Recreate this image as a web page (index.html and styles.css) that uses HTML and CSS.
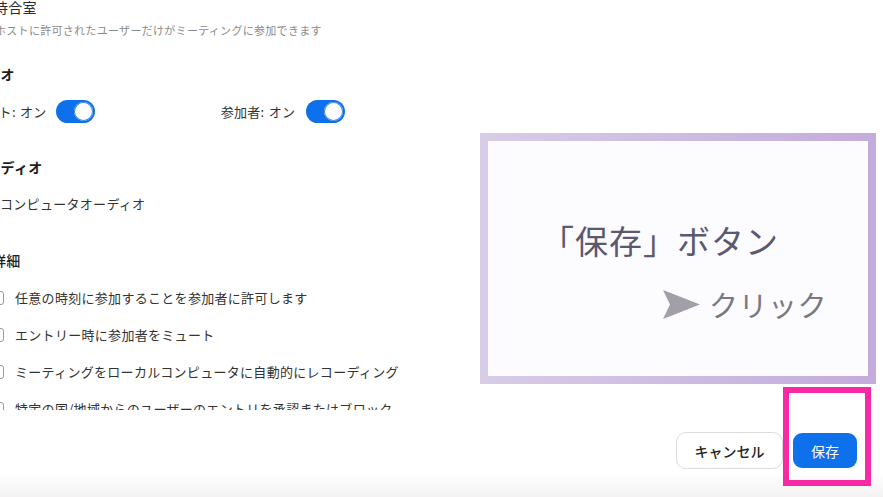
FILE: index.html
```html
<!DOCTYPE html>
<html lang="ja">
<head>
<meta charset="utf-8">
<title>ミーティング設定</title>
<link rel="stylesheet" href="styles.css">
</head>
<body>
<div class="dialog">
  <main class="content">
    <div class="title">待合室</div>
    <p class="desc">ホストに許可されたユーザーだけがミーティングに参加できます</p>
    <h3 class="heading h-video">ビデオ</h3>
    <div class="toggles">
      <div class="tgroup"><span>ホスト: オン</span><span class="switch"><span class="knob"></span></span></div>
      <div class="tgroup second"><span>参加者: オン</span><span class="switch"><span class="knob"></span></span></div>
    </div>
    <h3 class="heading h-audio">オーディオ</h3>
    <div class="option">コンピュータオーディオ</div>
    <h3 class="heading h-detail">詳細</h3>
    <ul class="checks">
      <li><span class="box"></span>任意の時刻に参加することを参加者に許可します</li>
      <li><span class="box"></span>エントリー時に参加者をミュート</li>
      <li><span class="box"></span>ミーティングをローカルコンピュータに自動的にレコーディング</li>
      <li><span class="box"></span>特定の国/地域からのユーザーのエントリを承認またはブロック</li>
    </ul>
  </main>
  <footer class="footer">
    <button class="btn cancel">キャンセル</button>
    <button class="btn save">保存</button>
  </footer>
</div>

<div class="callout">
  <div class="callout-inner">
    <div class="callout-title">「保存」ボタン</div>
    <div class="callout-action">
      <svg class="arrow" width="37" height="29" viewBox="0 0 37 29"><polygon points="0,0 37,14.5 0,29 7,14.5" fill="#a39fa9"/></svg>
      <span>クリック</span>
    </div>
  </div>
</div>
<div class="highlight"></div>
</body>
</html>
```

FILE: styles.css
```css
html, body {
  margin: 0;
  padding: 0;
  background: #ffffff;
  overflow: hidden;
}
body {
  width: 883px;
  height: 497px;
  font-family: "Noto Sans CJK JP", "Noto Sans", sans-serif;
  color: #232323;
  position: relative;
}
.dialog {
  display: flex;
  flex-direction: column;
  height: 497px;
}
.content {
  height: 410px;
  overflow: hidden;
  margin-left: -28px;
  flex: none;
  letter-spacing: 0.3px;
}
.title {
  font-size: 14px;
  line-height: 14px;
  padding-left: 22px;
  color: #2a2a2a;
}
.desc {
  margin: 8px 0 0;
  font-size: 11px;
  line-height: 16px;
  color: #8a8a8a;
  padding-left: 23px;
}
.heading {
  margin: 0;
  font-size: 14px;
  line-height: 20px;
  font-weight: 700;
  color: #1e1e1e;
}
.h-video { margin-top: 26px; }
.toggles {
  display: flex;
  gap: 126px;
  margin-top: 15px;
  height: 24px;
  align-items: center;
  font-size: 13px;
  color: #333;
  word-spacing: 1px;
}
.tgroup {
  display: flex;
  align-items: center;
  gap: 9px;
}
.tgroup.second { gap: 11px; }
.switch {
  width: 39px;
  height: 23px;
  border-radius: 12px;
  background: #0e71eb;
  display: flex;
  align-items: center;
  justify-content: flex-end;
  padding: 0 2px;
  box-sizing: border-box;
}
.knob {
  width: 19px;
  height: 19px;
  border-radius: 50%;
  background: #fff;
  box-shadow: 0 0 0 1px #3a86e8 inset;
}
.h-audio { margin-top: 34px; }
.option {
  margin-top: 17px;
  font-size: 13px;
  line-height: 20px;
  padding-left: 28px;
  color: #333;
}
.h-detail {
  margin-top: 36px;
  padding-left: 20px;
  font-weight: 500;
}
.checks {
  list-style: none;
  margin: 18px 0 0;
  padding: 0 0 0 19px;
  display: flex;
  flex-direction: column;
  gap: 17px;
}
.checks li {
  display: flex;
  align-items: center;
  gap: 11px;
  font-size: 13px;
  line-height: 20px;
  color: #333;
}
.box {
  width: 13px;
  height: 14px;
  border: 1px solid #9a9a9a;
  border-radius: 3px;
  box-sizing: border-box;
  flex: none;
}
.footer {
  flex: 1;
  display: flex;
  justify-content: flex-end;
  align-items: flex-start;
  gap: 10px;
  padding: 22px 26px 0 0;
  background: linear-gradient(to bottom, #ffffff 0, #ffffff 72%, #f3f1f1 100%);
}
.btn {
  font-family: "Noto Sans CJK JP", "Noto Sans", sans-serif;
  font-size: 14px;
  border-radius: 10px;
  cursor: pointer;
}
.cancel {
  width: 107px;
  height: 37px;
  background: #fff;
  border: 1px solid #dcdcdc;
  color: #222;
  font-weight: 500;
}
.save {
  width: 64px;
  height: 35px;
  margin-top: 1px;
  background: #0e71eb;
  border: none;
  color: #fff;
  border-radius: 9px;
}
.callout {
  position: absolute;
  left: 480px;
  top: 133px;
  width: 396px;
  height: 251px;
  padding: 8px;
  box-sizing: border-box;
  background: linear-gradient(to right, #d7cde6, #c3acdc);
}
.callout-inner {
  height: 100%;
  background: #fcfbfe;
  padding: 79px 0 0 53px;
  box-sizing: border-box;
}
.callout-title {
  font-size: 33px;
  line-height: 40px;
  color: #5a5970;
  letter-spacing: 1px;
}
.callout-action {
  display: flex;
  align-items: center;
  gap: 9px;
  margin: 28px 0 0 122px;
  height: 32px;
  font-size: 29px;
  color: #7a797f;
  letter-spacing: 0.5px;
}
.arrow { flex: none; }
.highlight {
  position: absolute;
  left: 783px;
  top: 387px;
  width: 88px;
  height: 99px;
  border: 6px solid #f72aa3;
  box-sizing: border-box;
}
```
